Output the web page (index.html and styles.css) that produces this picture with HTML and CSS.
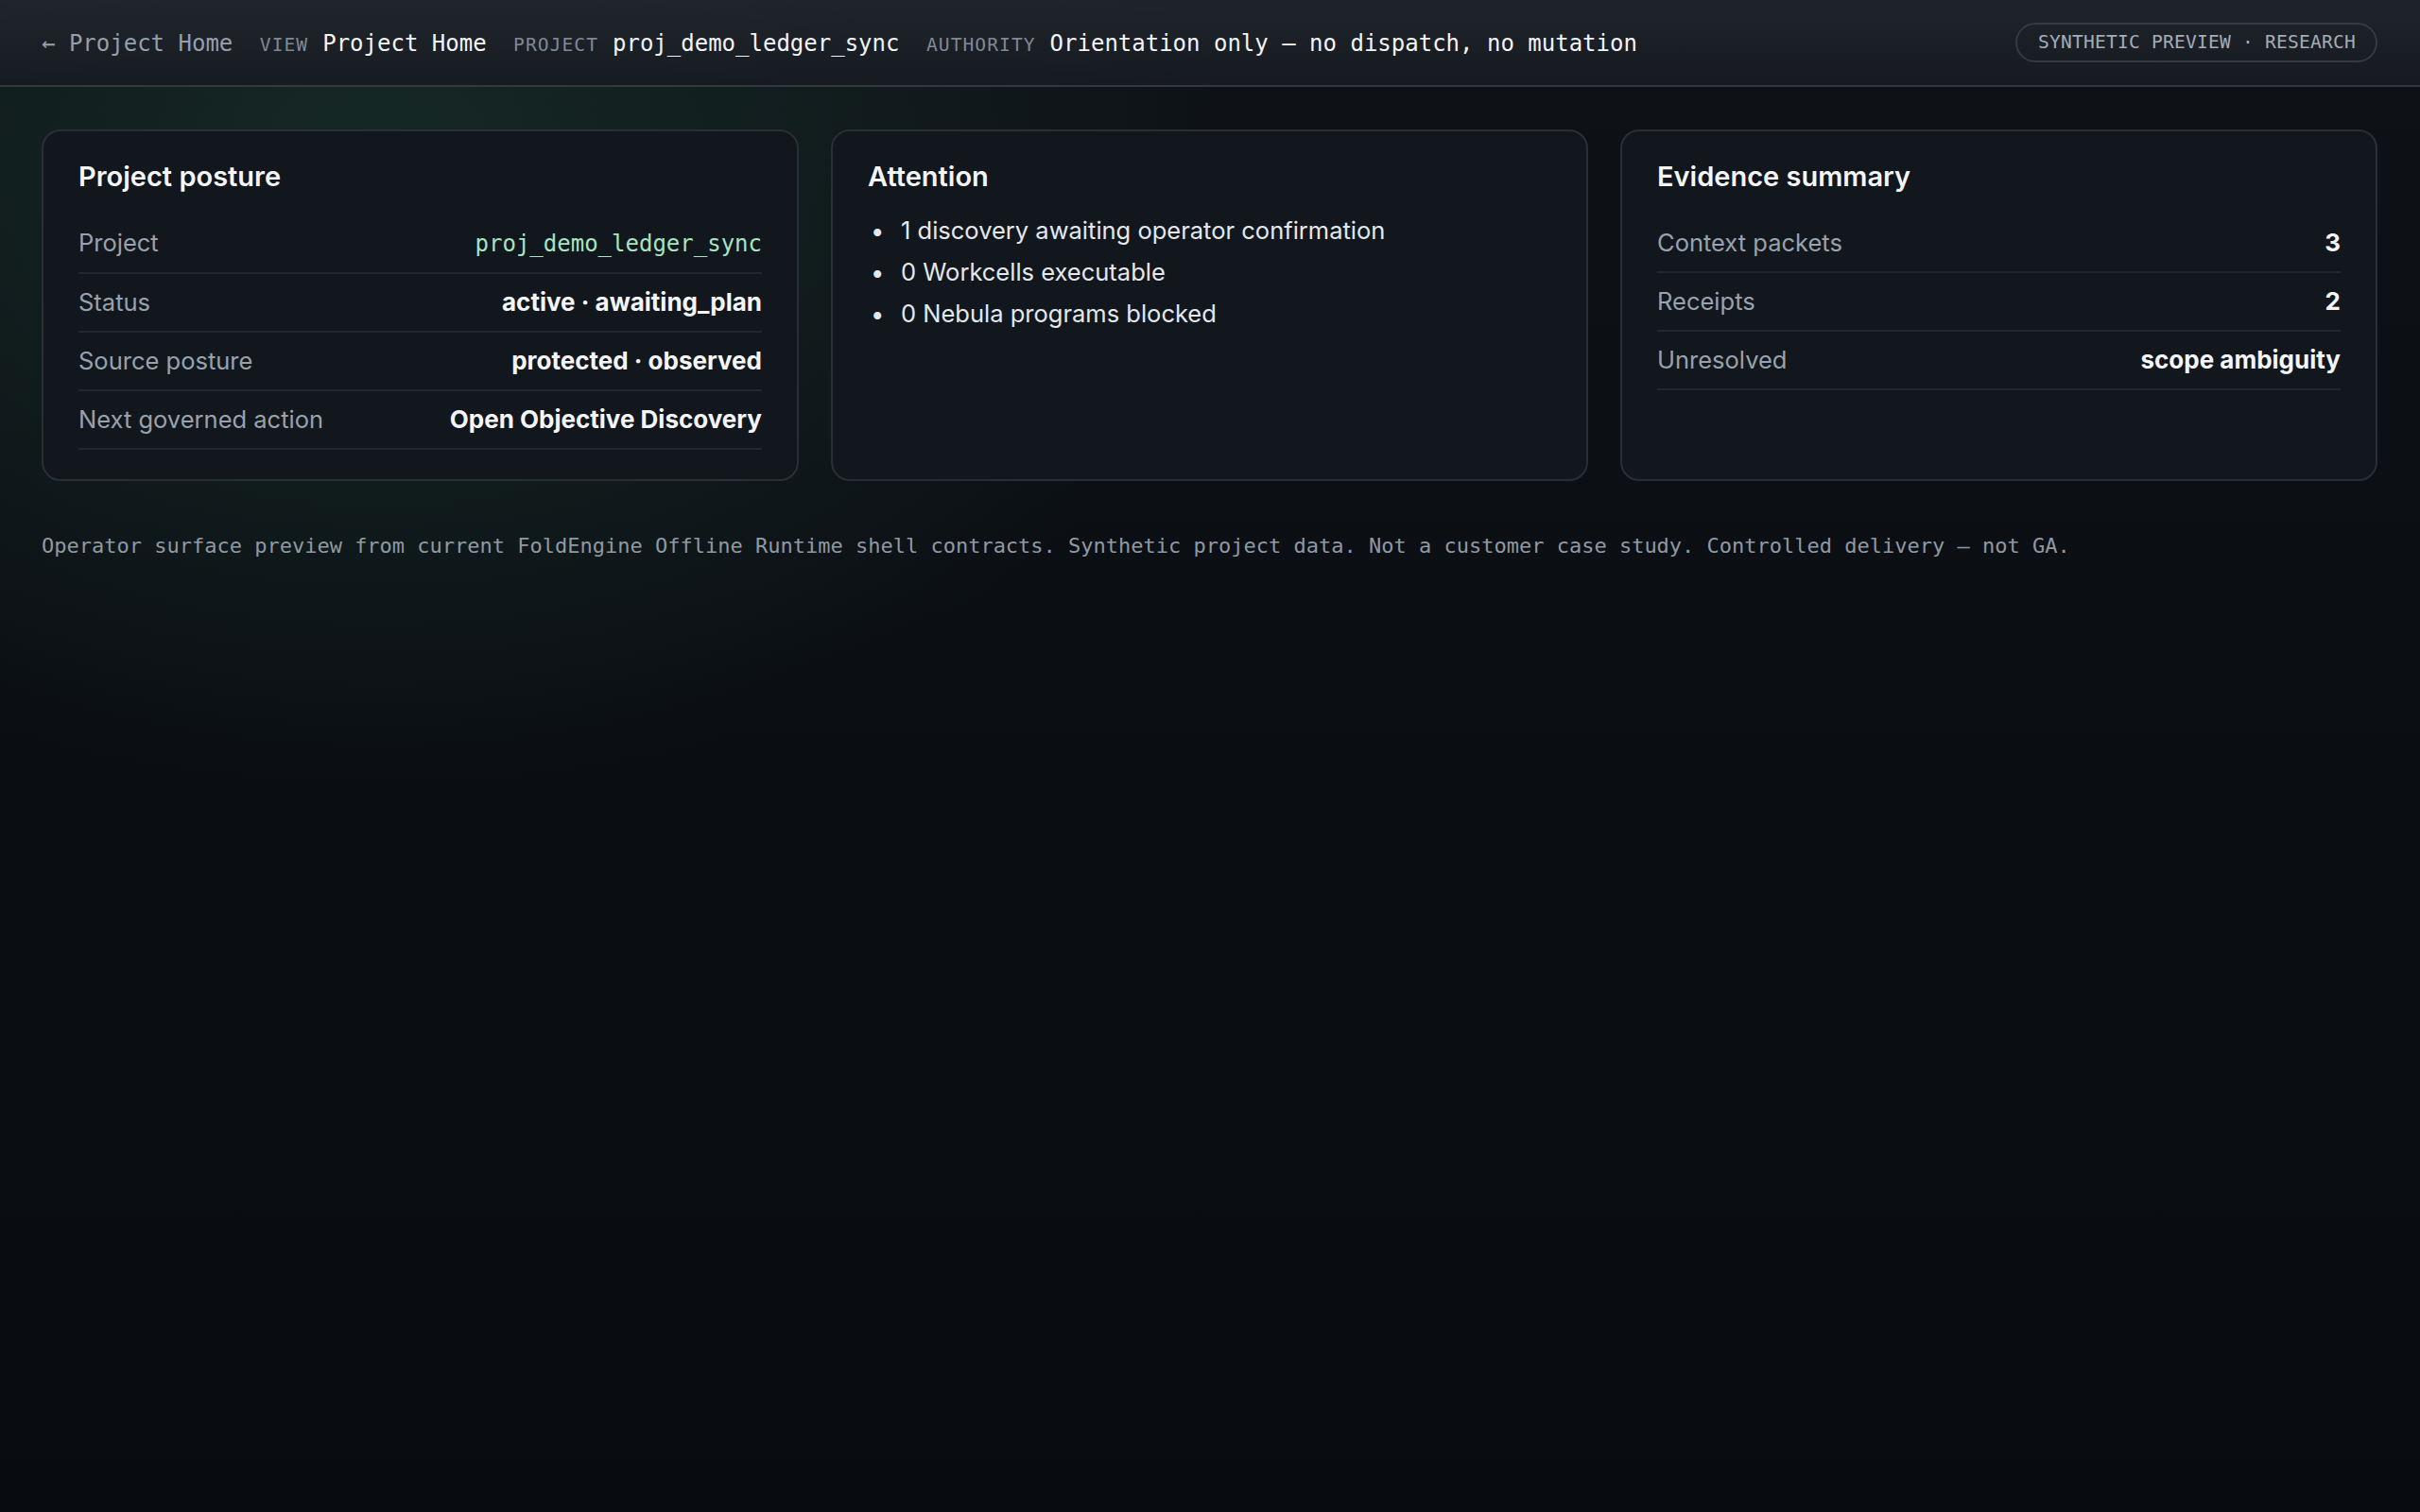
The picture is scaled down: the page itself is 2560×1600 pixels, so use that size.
FILE: index.html
```html
<!DOCTYPE html>
<html lang="en">
<head>
    <meta charset="UTF-8">
    <meta name="viewport" content="width=device-width, initial-scale=1.0">
    <title>Project Home</title>
    <link rel="stylesheet" href="styles.css">
</head>
<body>
    <header class="topbar">
        <nav class="crumbs">
            <a class="back" href="#">← Project Home</a>
            <span class="crumb"><span class="crumb-label">VIEW</span><span class="crumb-value">Project Home</span></span>
            <span class="crumb"><span class="crumb-label">PROJECT</span><span class="crumb-value">proj_demo_ledger_sync</span></span>
            <span class="crumb"><span class="crumb-label">AUTHORITY</span><span class="crumb-value">Orientation only — no dispatch, no mutation</span></span>
        </nav>
        <span class="badge">SYNTHETIC PREVIEW · RESEARCH</span>
    </header>

    <main class="page">
        <section class="cards">
            <article class="card">
                <h2>Project posture</h2>
                <dl class="facts">
                    <div class="fact"><dt>Project</dt><dd class="mono">proj_demo_ledger_sync</dd></div>
                    <div class="fact"><dt>Status</dt><dd>active · awaiting_plan</dd></div>
                    <div class="fact"><dt>Source posture</dt><dd>protected · observed</dd></div>
                    <div class="fact"><dt>Next governed action</dt><dd>Open Objective Discovery</dd></div>
                </dl>
            </article>

            <article class="card">
                <h2>Attention</h2>
                <ul class="attention">
                    <li>1 discovery awaiting operator confirmation</li>
                    <li>0 Workcells executable</li>
                    <li>0 Nebula programs blocked</li>
                </ul>
            </article>

            <article class="card">
                <h2>Evidence summary</h2>
                <dl class="facts">
                    <div class="fact"><dt>Context packets</dt><dd>3</dd></div>
                    <div class="fact"><dt>Receipts</dt><dd>2</dd></div>
                    <div class="fact"><dt>Unresolved</dt><dd>scope ambiguity</dd></div>
                </dl>
            </article>
        </section>

        <p class="note">Operator surface preview from current FoldEngine Offline Runtime shell contracts. Synthetic project data. Not a customer case study. Controlled delivery — not GA.</p>
    </main>
</body>
</html>
```

FILE: styles.css
```css
html, body {
    margin: 0;
    min-height: 100%;
}
body {
    min-height: 100vh;
    font-family: Inter, "Noto Sans", sans-serif;
    color: #e6eaef;
    background:
        radial-gradient(ellipse 1250px 900px at 400px 190px, rgba(40, 96, 72, 0.3), rgba(40, 96, 72, 0) 72%),
        linear-gradient(180deg, #0e1217 0%, #0b0e13 45%, #080b0f 100%);
}

/* top bar */
.topbar {
    box-sizing: border-box;
    display: flex;
    align-items: center;
    justify-content: space-between;
    height: 92px;
    padding: 3px 45px 0 44px;
    background: linear-gradient(180deg, rgba(33, 38, 45, 0.9), rgba(23, 27, 33, 0.9));
    border-bottom: 2px solid #34393f;
    font-family: "DejaVu Sans Mono", "Liberation Mono", monospace;
}
.crumbs {
    display: flex;
    align-items: baseline;
    gap: 28.5px;
    font-size: 24px;
    line-height: 36px;
}
.back {
    color: #959fac;
    text-decoration: none;
}
.crumb {
    display: flex;
    align-items: baseline;
    gap: 15px;
}
.crumb-label {
    font-size: 19.6px;
    letter-spacing: 1.05px;
    color: #7f8996;
}
.crumb-value {
    color: #f1f4f7;
}
.badge {
    margin-top: -4px;
    padding: 7px 21px 7px 22px;
    border: 2px solid #353a41;
    border-radius: 999px;
    font-size: 19.6px;
    line-height: 24px;
    letter-spacing: 0.2px;
    color: #a3adb9;
}

/* content */
.page {
    padding: 45px 45px 40px 44px;
}
.cards {
    display: grid;
    grid-template-columns: repeat(3, 1fr);
    gap: 34px;
}
.card {
    padding: 28.5px 37px 30.5px 37px;
    background: #12171d;
    border: 2px solid #2a2f36;
    border-radius: 20px;
}
.card h2 {
    margin: 0 0 22px;
    font-size: 29px;
    line-height: 1.3;
    font-weight: 600;
    color: #f3f5f8;
}
.facts {
    margin: 0;
}
.fact {
    display: flex;
    justify-content: space-between;
    align-items: baseline;
    padding: 12px 0;
    border-bottom: 2px solid #22272e;
    font-size: 25.5px;
    line-height: 36px;
}
.fact dt {
    color: #98a2ad;
}
.fact dd {
    margin: 0;
    font-size: 26px;
    font-weight: 700;
    color: #f3f5f8;
}
.fact dd.mono {
    font-family: "DejaVu Sans Mono", "Liberation Mono", monospace;
    font-size: 24px;
    font-weight: 400;
    color: #a6e4c2;
}
.attention {
    margin: 0;
    padding: 0;
    list-style: none;
    font-size: 25.5px;
    line-height: 34px;
    color: #e3e8ee;
}
.attention li {
    display: flex;
    margin-bottom: 10px;
}
.attention li::before {
    content: "•";
    flex: 0 0 32px;
    padding-left: 3px;
}
.note {
    margin: 52px 0 0;
    font-family: "DejaVu Sans Mono", "Liberation Mono", monospace;
    font-size: 22px;
    line-height: 33px;
    color: #8f99a4;
}
```
